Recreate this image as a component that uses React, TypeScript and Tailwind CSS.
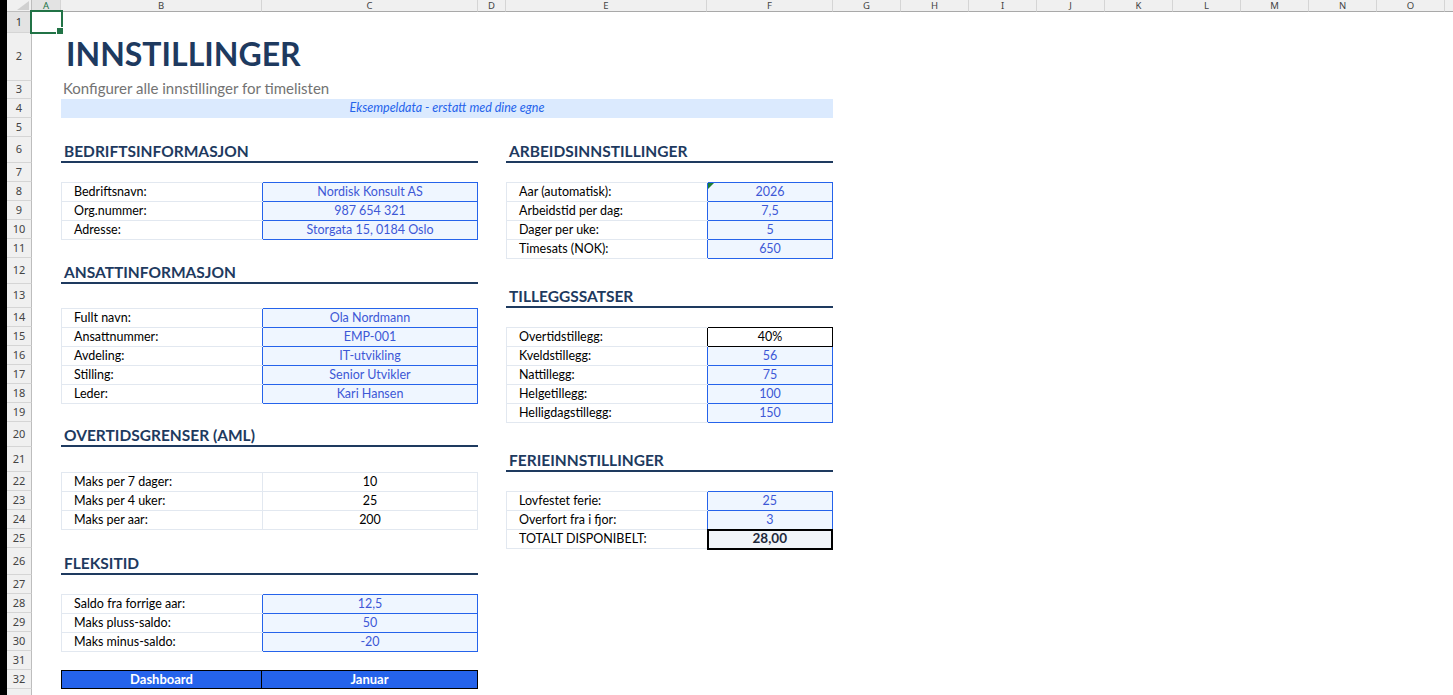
import React from "react";

const LETTERS = ["A", "B", "C", "D", "E", "F", "G", "H", "I", "J", "K", "L", "M", "N", "O", ""];
const COLS = [
  "col-start-2", "col-start-3", "col-start-4", "col-start-5", "col-start-6", "col-start-7", "col-start-8", "col-start-9",
  "col-start-10", "col-start-11", "col-start-12", "col-start-13", "col-start-14", "col-start-15", "col-start-16", "col-start-17",
];
const ROWS = [
  "row-start-2", "row-start-3", "row-start-4", "row-start-5", "row-start-6", "row-start-7", "row-start-8", "row-start-9",
  "row-start-10", "row-start-11", "row-start-12", "row-start-13", "row-start-14", "row-start-15", "row-start-16", "row-start-17",
  "row-start-18", "row-start-19", "row-start-20", "row-start-21", "row-start-22", "row-start-23", "row-start-24", "row-start-25",
  "row-start-26", "row-start-27", "row-start-28", "row-start-29", "row-start-30", "row-start-31", "row-start-32", "row-start-33",
  "row-start-34",
];

type Kind = "input" | "plain" | "pct" | "total";
interface Row {
  label: string;
  value: string;
  kind: Kind;
  flag?: boolean;
}

const valueCls: Record<Kind, string> = {
  input: "border border-[#2563eb] bg-[#eff6ff] text-[#3d58d6]",
  plain: "border border-[#e2e8f0] bg-white text-black",
  pct: "border border-black bg-white text-black",
  total: "border-2 border-black bg-[#f1f5f9] text-[#1e293b] font-bold text-[13.5px]",
};

function DataTable({ area, rows }: { area: string; rows: Row[] }) {
  return (
    <div className={area}>
      <table className="w-full table-fixed border-collapse text-[12.5px] leading-none">
        <colgroup>
          <col className="w-[201px]" />
          <col />
        </colgroup>
        <tbody>
          {rows.map((r) => (
            <tr key={r.label} className="h-[19px]">
              <td className="border border-r-0 border-[#e2e8f0] p-0 pl-[12px] text-black whitespace-nowrap">{r.label}</td>
              <td className={`relative p-0 text-center whitespace-nowrap ${valueCls[r.kind]}`}>
                {r.flag && (
                  <svg className="absolute left-0 top-0" width="6" height="6" viewBox="0 0 6 6">
                    <polygon points="0,0 6,0 0,6" fill="#1e7e34" />
                  </svg>
                )}
                {r.value}
              </td>
            </tr>
          ))}
        </tbody>
      </table>
    </div>
  );
}

function Section({ area, title }: { area: string; title: string }) {
  return (
    <div className={`${area} flex items-end border-b-2 border-[#1e3a5f] pb-[2px] pl-[3px]`}>
      <span className="whitespace-nowrap text-[15.5px] font-bold leading-none text-[#1e3a5f]">{title}</span>
    </div>
  );
}

const bedrift: Row[] = [
  { label: "Bedriftsnavn:", value: "Nordisk Konsult AS", kind: "input" },
  { label: "Org.nummer:", value: "987 654 321", kind: "input" },
  { label: "Adresse:", value: "Storgata 15, 0184 Oslo", kind: "input" },
];
const ansatt: Row[] = [
  { label: "Fullt navn:", value: "Ola Nordmann", kind: "input" },
  { label: "Ansattnummer:", value: "EMP-001", kind: "input" },
  { label: "Avdeling:", value: "IT-utvikling", kind: "input" },
  { label: "Stilling:", value: "Senior Utvikler", kind: "input" },
  { label: "Leder:", value: "Kari Hansen", kind: "input" },
];
const overtid: Row[] = [
  { label: "Maks per 7 dager:", value: "10", kind: "plain" },
  { label: "Maks per 4 uker:", value: "25", kind: "plain" },
  { label: "Maks per aar:", value: "200", kind: "plain" },
];
const fleks: Row[] = [
  { label: "Saldo fra forrige aar:", value: "12,5", kind: "input" },
  { label: "Maks pluss-saldo:", value: "50", kind: "input" },
  { label: "Maks minus-saldo:", value: "-20", kind: "input" },
];
const arbeid: Row[] = [
  { label: "Aar (automatisk):", value: "2026", kind: "input", flag: true },
  { label: "Arbeidstid per dag:", value: "7,5", kind: "input" },
  { label: "Dager per uke:", value: "5", kind: "input" },
  { label: "Timesats (NOK):", value: "650", kind: "input" },
];
const tillegg: Row[] = [
  { label: "Overtidstillegg:", value: "40%", kind: "pct" },
  { label: "Kveldstillegg:", value: "56", kind: "input" },
  { label: "Nattillegg:", value: "75", kind: "input" },
  { label: "Helgetillegg:", value: "100", kind: "input" },
  { label: "Helligdagstillegg:", value: "150", kind: "input" },
];
const ferie: Row[] = [
  { label: "Lovfestet ferie:", value: "25", kind: "input" },
  { label: "Overfort fra i fjor:", value: "3", kind: "input" },
  { label: "TOTALT DISPONIBELT:", value: "28,00", kind: "total" },
];

export default function App() {
  return (
    <div className="flex h-screen w-screen overflow-hidden bg-white font-['Lato',sans-serif]">
      <div className="w-[7px] shrink-0 bg-black" />
      <div className="grid min-w-0 flex-1 grid-cols-[25px_29px_201px_216px_28px_201px_126px_68px_68px_68px_68px_68px_68px_68px_68px_68px_68px] grid-rows-[12px_21px_48px_18px_19px_19px_26px_19px_19px_19px_19px_19px_26px_24px_19px_19px_19px_19px_19px_19px_25px_25px_19px_19px_19px_19px_27px_19px_19px_19px_19px_19px_19px_19px] overflow-hidden">
        {/* corner */}
        <div className="relative col-start-1 row-start-1 border-b border-r border-[#bdbdbd] bg-[#f0f0f0]">
          <svg className="absolute bottom-[1px] right-[2px]" width="12" height="9" viewBox="0 0 12 9">
            <polygon points="12,0 12,9 0,9" fill="#d0d0d0" />
          </svg>
        </div>
        {LETTERS.map((l, i) => (
          <div
            key={COLS[i]}
            className={`${COLS[i]} row-start-1 flex items-start justify-center overflow-hidden border-b border-r border-b-[#a9a9a9] border-r-[#d5d5d5] font-['Noto_Sans',sans-serif] ${
              i === 0 ? "bg-[#e3e3e3] text-[#217346]" : "bg-[#f0f0f0] text-[#444444]"
            }`}
          >
            <span className="text-[9.5px] leading-[11px]">{l}</span>
          </div>
        ))}
        {ROWS.map((r, i) => (
          <div
            key={r}
            className={`col-start-1 ${r} flex items-center justify-center border-b border-r border-b-[#d5d5d5] border-r-[#bdbdbd] font-['Noto_Sans',sans-serif] text-[11px] ${
              i === 0 ? "bg-[#e3e3e3] text-[#333333]" : "bg-[#f0f0f0] text-[#444444]"
            }`}
          >
            {i < 32 ? i + 1 : ""}
          </div>
        ))}

        {/* selected cell A1 */}
        <div className="relative col-start-2 row-start-2">
          <div className="absolute -bottom-[1px] -left-[2px] -right-[2px] -top-[2px] border-2 border-[#217346]" />
          <div className="absolute -bottom-[2px] -right-[3px] h-[8px] w-[8px] border border-white bg-[#217346]" />
        </div>

        {/* title */}
        <div className="col-start-3 col-span-6 row-start-3 flex items-end pb-[11px] pl-[5px]">
          <span className="whitespace-nowrap text-[32px] font-bold leading-none text-[#1e3a5f]">INNSTILLINGER</span>
        </div>
        <div className="col-start-3 col-span-6 row-start-4 flex items-end pb-[3px] pl-[2px]">
          <span className="whitespace-nowrap text-[15px] leading-none text-[#737373]">Konfigurer alle innstillinger for timelisten</span>
        </div>
        <div className="col-start-3 col-span-5 row-start-5 flex items-center justify-center bg-[#dbeafe]">
          <span className="text-[12.5px] italic leading-none text-[#2563eb]">Eksempeldata - erstatt med dine egne</span>
        </div>

        {/* left column */}
        <Section area="col-start-3 col-span-2 row-start-7" title="BEDRIFTSINFORMASJON" />
        <DataTable area="col-start-3 col-span-2 row-start-9 row-span-3" rows={bedrift} />
        <Section area="col-start-3 col-span-2 row-start-13" title="ANSATTINFORMASJON" />
        <DataTable area="col-start-3 col-span-2 row-start-15 row-span-5" rows={ansatt} />
        <Section area="col-start-3 col-span-2 row-start-21" title="OVERTIDSGRENSER (AML)" />
        <DataTable area="col-start-3 col-span-2 row-start-23 row-span-3" rows={overtid} />
        <Section area="col-start-3 col-span-2 row-start-27" title="FLEKSITID" />
        <DataTable area="col-start-3 col-span-2 row-start-29 row-span-3" rows={fleks} />

        <div className="col-start-3 col-span-2 row-start-33 flex border border-black bg-[#2563eb] text-[13px] font-bold text-white">
          <div className="flex w-[200px] items-center justify-center border-r border-black">Dashboard</div>
          <div className="flex flex-1 items-center justify-center">Januar</div>
        </div>

        {/* right column */}
        <Section area="col-start-6 col-span-2 row-start-7" title="ARBEIDSINNSTILLINGER" />
        <DataTable area="col-start-6 col-span-2 row-start-9 row-span-4" rows={arbeid} />
        <Section area="col-start-6 col-span-2 row-start-14" title="TILLEGGSSATSER" />
        <DataTable area="col-start-6 col-span-2 row-start-16 row-span-5" rows={tillegg} />
        <Section area="col-start-6 col-span-2 row-start-22" title="FERIEINNSTILLINGER" />
        <DataTable area="col-start-6 col-span-2 row-start-24 row-span-3" rows={ferie} />
      </div>
    </div>
  );
}
